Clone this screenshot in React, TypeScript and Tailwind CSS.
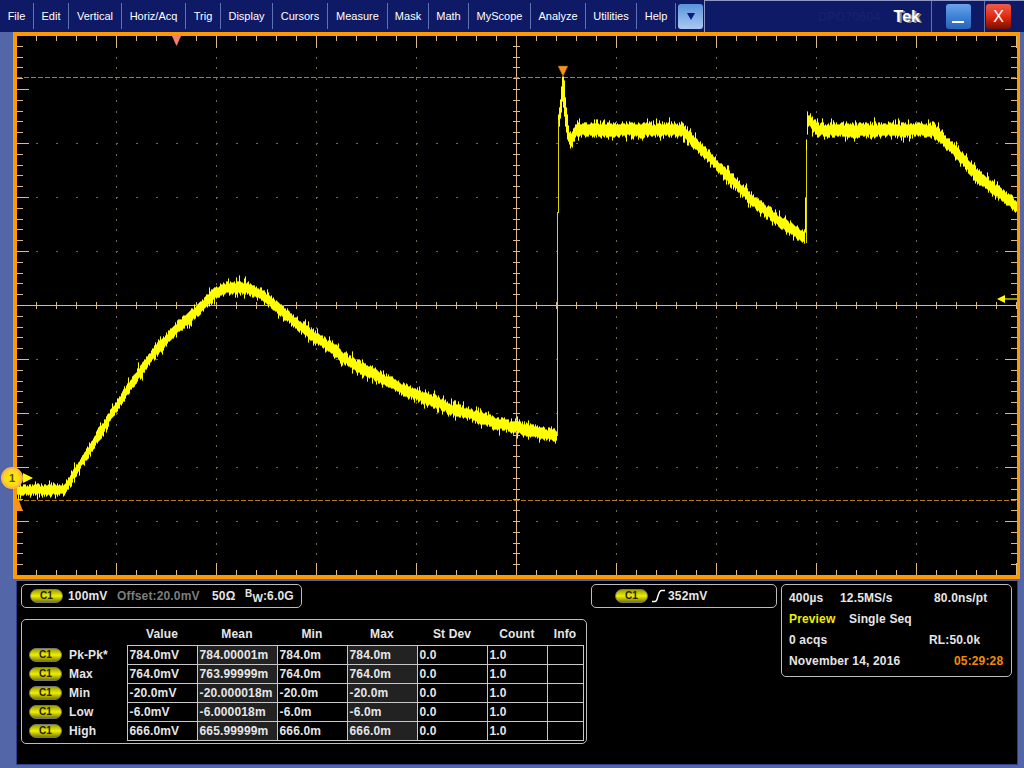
import { useMemo } from "react";

const FONT = "font-['Liberation_Sans',Arial,sans-serif]";

const MENU = [
  { label: "File", w: "w-[34px]" },
  { label: "Edit", w: "w-[35px]" },
  { label: "Vertical", w: "w-[53px]" },
  { label: "Horiz/Acq", w: "w-[64px]" },
  { label: "Trig", w: "w-[35px]" },
  { label: "Display", w: "w-[52px]" },
  { label: "Cursors", w: "w-[55px]" },
  { label: "Measure", w: "w-[60px]" },
  { label: "Mask", w: "w-[41px]" },
  { label: "Math", w: "w-[40px]" },
  { label: "MyScope", w: "w-[62px]" },
  { label: "Analyze", w: "w-[55px]" },
  { label: "Utilities", w: "w-[51px]" },
  { label: "Help", w: "w-[39px]" },
];

const MEAS = [
  ["Pk-Pk*", "784.0mV", "784.00001m", "784.0m", "784.0m"],
  ["Max", "764.0mV", "763.99999m", "764.0m", "764.0m"],
  ["Min", "-20.0mV", "-20.000018m", "-20.0m", "-20.0m"],
  ["Low", "-6.0mV", "-6.000018m", "-6.0m", "-6.0m"],
  ["High", "666.0mV", "665.99999m", "666.0m", "666.0m"],
];

// x, centre y, half thickness of the noisy trace
const TRACE: [number, number, number][] = [
  [17, 490, 5], [64, 490, 5], [80, 465, 5], [97, 438, 6], [120, 401, 6], [150, 358, 6],
  [175, 330, 6], [195, 312, 6], [215, 293, 6], [228, 288, 6], [240, 287, 6], [255, 291, 6],
  [270, 301, 6], [300, 326, 6], [350, 362, 6], [400, 388, 6], [450, 408, 6], [500, 424, 6],
  [556, 436, 6], [557, 436, 3], [558, 135, 15], [559, 125, 10], [561, 102, 13], [563, 88, 14],
  [565, 105, 15], [567, 125, 14], [569, 136, 7], [571, 141, 8], [573, 137, 6], [575, 131, 6],
  [577, 130, 7], [682, 130, 7], [700, 148, 6], [750, 198, 6], [780, 222, 6], [805, 238, 6],
  [806, 190, 45], [807, 132, 14], [808, 122, 7], [810, 119, 6], [813, 125, 7], [818, 130, 7],
  [933, 130, 7], [950, 146, 6], [980, 178, 7], [1000, 193, 6], [1017, 208, 6],
];

function traceAt(x: number): [number, number] {
  for (let i = 1; i < TRACE.length; i++) {
    const [x1, y1, h1] = TRACE[i];
    if (x <= x1) {
      const [x0, y0, h0] = TRACE[i - 1];
      const t = (x - x0) / (x1 - x0);
      return [y0 + (y1 - y0) * t, h0 + (h1 - h0) * t];
    }
  }
  return [208, 6];
}

function buildTrace() {
  let seed = 1234567;
  const rnd = () => {
    seed = (seed * 16807) % 2147483647;
    return seed / 2147483647;
  };
  let core = "";
  let halo = "";
  let wobble = 0;
  for (let x = 17; x < 1017; x++) {
    const [y, h] = traceAt(x + 0.5);
    if (x % 4 === 0) wobble = (rnd() - 0.5) * 1.2;
    const c = y + (h < 10 ? wobble : 0);
    const up = h * (0.6 + rnd() * 0.5) + (rnd() > 0.82 ? 1 + rnd() * 4 : 0);
    const dn = h * (0.6 + rnd() * 0.5) + (rnd() > 0.82 ? 1 + rnd() * 4 : 0);
    core += `M${x + 0.5} ${(c - up).toFixed(0)}V${(c + dn).toFixed(0)}`;
    halo += `M${x + 0.5} ${(c - up - 1).toFixed(0)}V${(c + dn + 1).toFixed(0)}`;
  }
  return { core, halo };
}

function buildGrid() {
  const rows: number[] = [];
  for (let k = -25; k <= 25; k++) rows.push(Math.round(305 - 10.8 * k));
  let ticks = "";
  let dots = "";
  for (let x = 16; x <= 1016; x += 20) {
    const major = (x - 16) % 100 === 0;
    const len = major ? 12 : 5;
    ticks += `M${x + 0.5} 36V${36 + len}M${x + 0.5} 575V${575 - len}`;
    ticks += `M${x + 0.5} 302V309`;
    for (const m of [143, 197, 251, 359, 413, 467, 521]) dots += `M${x} ${m + 0.5}h2`;
  }
  rows.forEach((y, k) => {
    const major = (k - 25) % 5 === 0;
    const len = major ? 12 : 6;
    ticks += `M17 ${y + 0.5}H${17 + len}M1017 ${y + 0.5}H${1017 - len}`;
    ticks += `M513 ${y + 0.5}H520`;
    for (let x = 116; x <= 916; x += 100) {
      if (x !== 516) dots += `M${x + 0.5} ${y}v2`;
    }
  });
  return { ticks, dots };
}

function ChannelPill() {
  return (
    <span className="flex h-[14px] w-[33px] shrink-0 items-center justify-center rounded-full border border-[#77776a] bg-linear-to-b from-[#a0a000] via-[#f0f000] to-[#7c7c00] text-[10px] font-bold leading-none text-[#222200]">
      C1
    </span>
  );
}

function Scope() {
  const { core, halo } = useMemo(buildTrace, []);
  const { ticks, dots } = useMemo(buildGrid, []);
  return (
    <div className="relative ml-[13px] h-[547px] w-[1007px] border-y-4 border-l-4 border-r-[3px] border-[#ff9900] bg-black">
      <svg className="block" width="1000" height="539" viewBox="17 36 1000 539">
        <path d={dots} stroke="#75684f" strokeWidth="1" shapeRendering="crispEdges" fill="none" />
        <path d={ticks} stroke="#dcb98a" strokeWidth="1" shapeRendering="crispEdges" fill="none" />
        <path d="M17 305.5H1017M516.5 36V575" stroke="#dcb98a" strokeWidth="1" shapeRendering="crispEdges" fill="none" />
        <path d="M17 77.5H1017M17 500.5H1017" stroke="#b5781c" strokeWidth="1" strokeDasharray="5 2" shapeRendering="crispEdges" fill="none" />
        <path d={halo} stroke="#9c9c00" strokeWidth="1" shapeRendering="crispEdges" fill="none" />
        <path d={core} stroke="#ffff00" strokeWidth="1" shapeRendering="crispEdges" fill="none" />
        <path d="M557.5 212V436M558.5 120V213M806.5 150V243" stroke="#d8d800" strokeWidth="1" shapeRendering="crispEdges" fill="none" />
        <path d="M172 36H181L176.5 46Z" fill="#f58072" />
        <path d="M558 66H568L563 76.5Z" fill="#f7931e" stroke="#7a4a00" strokeWidth="0.5" />
        <path d="M1005 299H1017" stroke="#8f8f00" strokeWidth="2" />
        <path d="M997 299L1005 295V303Z" fill="#ffff00" />
        <path d="M23 473L33 478L23 483Z" fill="#ffff00" />
      </svg>
      {/* Ground marker, sits across the graticule border */}
      <div className="absolute left-[-16px] top-[431px] flex h-[22px] w-[22px] items-center justify-center rounded-full border-2 border-[#fbb454] bg-radial from-[#fff000] to-[#ffc81e] text-[11px] font-bold text-[#5a4a00]">
        1
      </div>
      <div className="absolute left-[-4px] top-[462px] h-0 w-0 border-x-[5px] border-b-[13px] border-x-transparent border-b-[#f7931e]" />
    </div>
  );
}

function TitleButton({ tone, children }: { tone: string; children: React.ReactNode }) {
  return (
    <div className={`flex h-[25px] w-[25px] items-center justify-center rounded-[3px] ${tone}`}>
      {children}
    </div>
  );
}

function TopBar() {
  return (
    <div className="flex h-8 shrink-0 bg-[#0f1a66] text-white">
      <div className="flex items-center">
        {MENU.map((m) => (
          <div
            key={m.label}
            className={`flex h-[26px] items-center justify-center border-r border-[#5f72b4] text-[11px] ${m.w}`}
          >
            {m.label}
          </div>
        ))}
      </div>
      <div className="ml-[2px] mr-[1px] flex items-center">
        <TitleButton tone="bg-linear-to-b from-[#5a94dc] to-[#a9c9f0]">
          <svg width="10" height="9" viewBox="0 0 10 9">
            <path d="M1 1H9L5 8Z" fill="#0a1a80" />
          </svg>
        </TitleButton>
      </div>
      <div className="flex flex-1 border-l border-t border-[#8f98c4]">
        <div className="flex w-[227px] items-center border-r border-[#5f72b4]">
          <span className="ml-[113px] text-[12px] tracking-[0.4px] text-[#18226e]">DPO70604</span>
          <span className="ml-[13px] text-[16px] font-bold leading-none [text-shadow:2px_1px_0_#8a8a8a]">Tek</span>
        </div>
        <div className="flex w-[53px] items-center justify-center border-r border-[#5f72b4]">
          <TitleButton tone="bg-linear-to-b from-[#6aa4e8] via-[#3f82d8] to-[#2a64b8]">
            <span className="mt-[10px] h-[2px] w-[12px] bg-white" />
          </TitleButton>
        </div>
        <div className="flex flex-1 items-center pl-[1px]">
          <TitleButton tone="bg-linear-to-b from-[#f05a48] via-[#e02a10] to-[#7a1000]">
            <span className="text-[16px] leading-none text-white">X</span>
          </TitleButton>
        </div>
      </div>
    </div>
  );
}

function ReadoutBox({ className, children }: { className: string; children: React.ReactNode }) {
  return <div className={`rounded-[5px] border border-[#bdbdbd] ${className}`}>{children}</div>;
}

function MeasTable() {
  const headers = ["Value", "Mean", "Min", "Max", "St Dev", "Count", "Info"];
  return (
    <table className="table-fixed border-collapse text-[12px] font-bold text-[#e6e6e6]">
      <colgroup>
        <col className="w-[105px]" />
        <col className="w-[70px]" />
        <col className="w-[80px]" />
        <col className="w-[70px]" />
        <col className="w-[70px]" />
        <col className="w-[70px]" />
        <col className="w-[60px]" />
        <col className="w-[36px]" />
      </colgroup>
      <thead>
        <tr className="h-[25px]">
          <th />
          {headers.map((h) => (
            <th key={h} className="pt-[3px] text-center font-bold">
              {h}
            </th>
          ))}
        </tr>
      </thead>
      <tbody>
        {MEAS.map(([name, value, mean, min, max]) => (
          <tr key={name} className="h-[19px] leading-none">
            <td>
              <div className="flex items-center gap-[7px] pl-[7px]">
                <ChannelPill />
                <span>{name}</span>
              </div>
            </td>
            <td className="border border-[#c8c8c8] pl-[2px]">{value}</td>
            <td className="border border-[#c8c8c8] bg-[#222222] pl-[2px]">{mean}</td>
            <td className="border border-[#c8c8c8] pl-[2px]">{min}</td>
            <td className="border border-[#c8c8c8] bg-[#222222] pl-[2px]">{max}</td>
            <td className="border border-[#c8c8c8] pl-[2px]">0.0</td>
            <td className="border border-[#c8c8c8] pl-[2px]">1.0</td>
            <td className="border border-[#c8c8c8]" />
          </tr>
        ))}
      </tbody>
    </table>
  );
}

function Readouts() {
  return (
    <div className="mx-[16px] mt-[2px] flex h-[184px] w-[1002px] gap-[4px] border-x border-b border-[#2f3f88] bg-black pl-[4px] pt-[3px] text-[12px] font-bold tracking-[0.15px] text-[#e6e6e6]">
      <div className="flex w-[566px] flex-col gap-[11px]">
        <ReadoutBox className="flex h-[24px] w-[281px] items-center pl-[8px]">
          <ChannelPill />
          <span className="ml-[5px] w-[49px]">100mV</span>
          <span className="w-[95px] text-[#7d7d7d]">Offset:20.0mV</span>
          <span className="w-[33px]">50Ω</span>
          <span className="flex items-center">
            <span className="mb-[4px] text-[10px] leading-none">B</span>
            <span className="mt-[4px] text-[11px] leading-none">W</span>
            <span>:6.0G</span>
          </span>
        </ReadoutBox>
        <ReadoutBox className="h-[125px] w-[566px]">
          <MeasTable />
        </ReadoutBox>
      </div>
      <ReadoutBox className="flex h-[24px] w-[186px] items-center pl-[23px]">
        <ChannelPill />
        <svg className="ml-[3px]" width="15" height="14" viewBox="0 0 15 14">
          <path d="M1 12.5H4C6 12.5 6 10 7 7S8.5 1.5 10.5 1.5H14" stroke="#ffffff" strokeWidth="1.5" fill="none" />
        </svg>
        <span className="ml-[2px]">352mV</span>
      </ReadoutBox>
      <ReadoutBox className="flex h-[93px] w-[231px] flex-col pl-[7px] pt-[2px]">
        <div className="flex h-[21px] items-center">
          <span className="w-[51px]">400µs</span>
          <span className="w-[94px]">12.5MS/s</span>
          <span>80.0ns/pt</span>
        </div>
        <div className="flex h-[21px] items-center">
          <span className="w-[60px] text-[#f0f000]">Preview</span>
          <span>Single Seq</span>
        </div>
        <div className="flex h-[21px] items-center">
          <span className="w-[140px]">0 acqs</span>
          <span>RL:50.0k</span>
        </div>
        <div className="flex h-[21px] items-center">
          <span className="w-[165px]">November 14, 2016</span>
          <span className="text-[#f08c00]">05:29:28</span>
        </div>
      </ReadoutBox>
    </div>
  );
}

export default function App() {
  return (
    <div className={`flex h-[768px] w-[1024px] flex-col overflow-hidden bg-[#5266a8] ${FONT}`}>
      <TopBar />
      <Scope />
      <Readouts />
    </div>
  );
}
